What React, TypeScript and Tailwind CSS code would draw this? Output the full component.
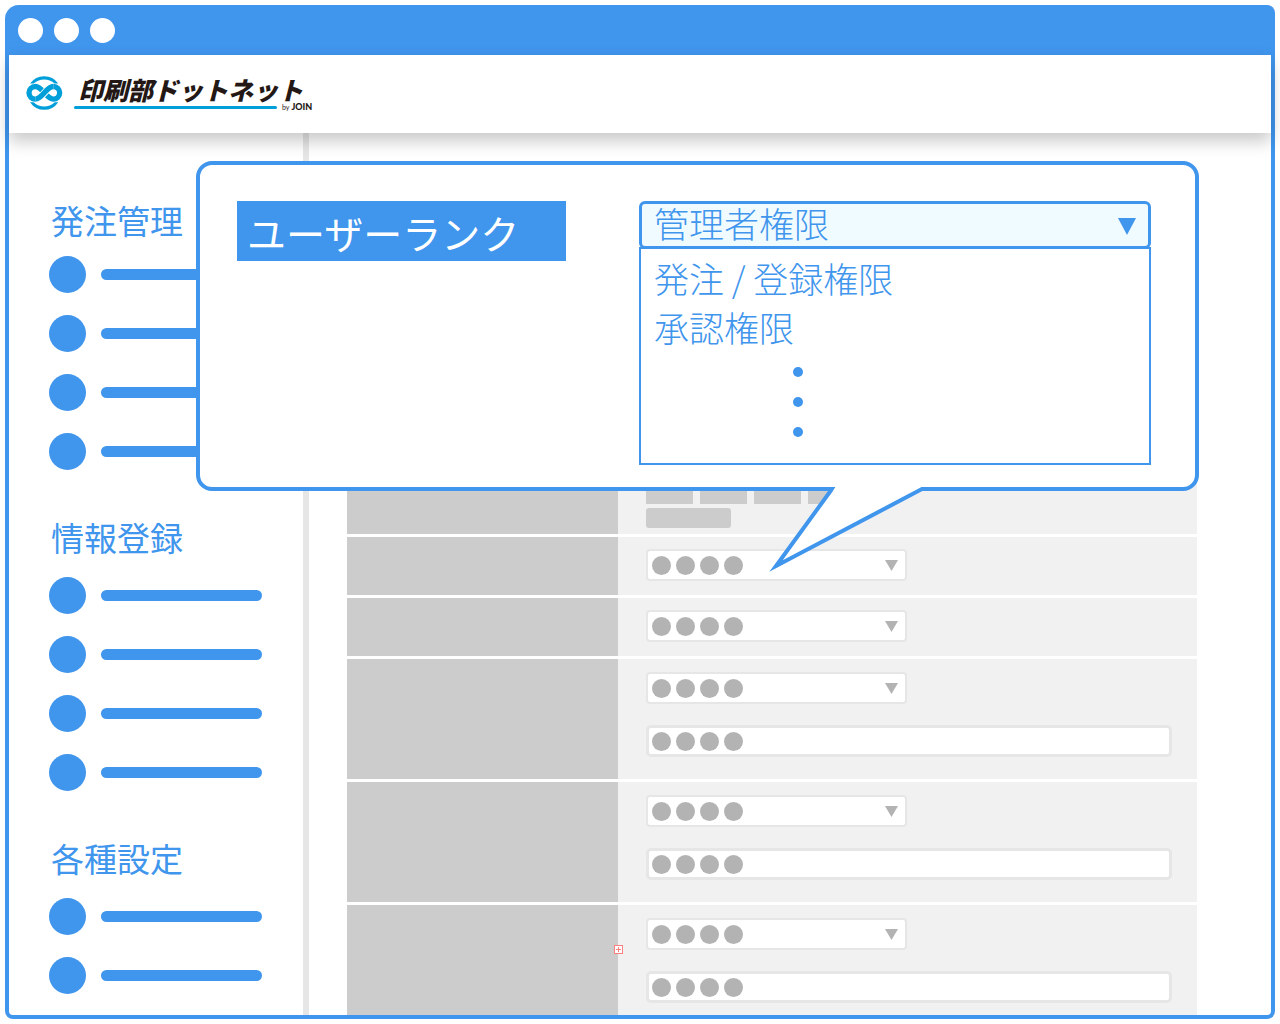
import React from "react";

const menuGroups = [
  { title: "発注管理", count: 4, headingGap: "mb-4" },
  { title: "情報登録", count: 4, headingGap: "mb-5" },
  { title: "各種設定", count: 2, headingGap: "mb-5" },
];

const formRows = [
  { id: "row-1", kind: "single", pad: "pt-3 pb-3.5" },
  { id: "row-2", kind: "single", pad: "pt-3 pb-3.5" },
  { id: "row-3", kind: "double", pad: "pt-[13px] pb-[22px]" },
  { id: "row-4", kind: "double", pad: "pt-[13px] pb-[22px]" },
  { id: "row-5", kind: "double", pad: "pt-[13px] pb-[11px]" },
];

function LogoMark() {
  return (
    <svg className="h-[34px] w-[37px] shrink-0" viewBox="79 228 111 101" fill="none" aria-hidden="true">
      <path d="M91 250 Q107 228 133.500 228 Q160 228 176 250 H165 Q151 238 133.500 238 Q116 238 102 250 Z" fill="#009fd9" />
      <path d="M91 306 Q107 329 133.500 329 Q160 329 176 306 H165 Q151 319 133.500 319 Q116 319 102 306 Z" fill="#009fd9" />
      <g stroke="#009fd9" strokeWidth="16">
        <path d="M107 297 A19 19 0 0 1 107 259 C128 259 140 297 161 297 A19 19 0 0 0 161 259" />
        <path d="M124 288 C132 282 137 274 144 268" stroke="#fff" strokeWidth="21" />
        <path d="M107 297 C128 297 140 259 161 259" />
      </g>
    </svg>
  );
}

function Logo() {
  return (
    <a href="#" className="flex items-center gap-[11px]" aria-label="印刷部ドットネット by JOIN">
      <LogoMark />
      <span className="flex flex-col">
        <span className="pt-0.5 pb-0.5 pl-1 text-[25px] leading-6 font-black whitespace-nowrap text-[#231815] italic">
          印刷部ドットネット
        </span>
        <span className="flex items-center gap-[5px]">
          <span className="h-[3px] w-[203px] rounded-full bg-[#009fd9]" />
          <span className="flex items-baseline gap-0.5 font-[Lato] leading-2 text-[#231815]">
            <span className="text-[7px]">by</span>
            <span className="text-[9px] font-black">JOIN</span>
          </span>
        </span>
      </span>
    </a>
  );
}

function Sidebar() {
  return (
    <nav className="w-[300px] shrink-0 border-r-6 border-[#e6e6e6] pt-[67px] pr-[41px] pb-[21px] pl-10">
      {menuGroups.map((group) => (
        <section key={group.title} className="mb-[47px] last:mb-0">
          <h2 className={`pl-0.5 text-[33px] leading-10 whitespace-nowrap text-[#4095ed] ${group.headingGap}`}>
            {group.title}
          </h2>
          <ul className="flex flex-col gap-[22px]">
            {Array.from({ length: group.count }, (_, i) => (
              <li key={i}>
                <a href="#" aria-label={`${group.title} ${i + 1}`} className="flex items-center gap-[15px]">
                  <span className="size-[37px] shrink-0 rounded-full bg-[#4095ed]" />
                  <span className="h-[11px] flex-1 rounded-full bg-[#4095ed]" />
                </a>
              </li>
            ))}
          </ul>
        </section>
      ))}
    </nav>
  );
}

function Dots() {
  return (
    <span className="pointer-events-none absolute inset-y-0 left-1.5 flex items-center gap-[5px]">
      {[0, 1, 2, 3].map((i) => (
        <span key={i} className="size-[19px] rounded-full bg-[#b3b3b3]" />
      ))}
    </span>
  );
}

function DotSelect({ label }: { label: string }) {
  return (
    <div className="relative w-[261px]">
      <select
        aria-label={label}
        className="block h-8 w-full appearance-none rounded-sm border-2 border-[#e6e6e6] bg-white"
      />
      <Dots />
      <svg className="pointer-events-none absolute top-[11px] right-[9px] h-[11px] w-[13px]" viewBox="0 0 13 11" aria-hidden="true">
        <path d="M0 0H13L6.500 11Z" fill="#b3b3b3" />
      </svg>
    </div>
  );
}

function DotInput({ label }: { label: string }) {
  return (
    <div className="relative">
      <input
        type="text"
        aria-label={label}
        className="block h-8 w-full rounded-[5px] border-3 border-[#e6e6e6] bg-white"
      />
      <Dots />
    </div>
  );
}

function FormTable() {
  return (
    <div className="flex flex-1 flex-col gap-[3px] pt-[38px] pr-[74px] pl-[38px]">
      <div className="flex h-[363px]">
        <div className="w-[271px] shrink-0 bg-[#cccccc]" />
        <div className="flex flex-1 flex-col justify-end gap-1 bg-[#f1f1f1] pb-1.5 pl-7">
          <div className="flex gap-[7px]">
            {[0, 1, 2, 3].map((i) => (
              <span key={i} className="h-5 w-[47px] bg-[#cccccc]" />
            ))}
          </div>
          <span className="h-5 w-[85px] rounded-[3px] bg-[#cccccc]" />
        </div>
      </div>
      {formRows.map((row) => (
        <div key={row.id} className="relative flex last:flex-1">
          <div className="w-[271px] shrink-0 bg-[#cccccc]" />
          <div className={`flex flex-1 flex-col gap-[21px] bg-[#f1f1f1] pr-[25px] pl-7 ${row.pad}`}>
            <DotSelect label={`${row.id} 選択`} />
            {row.kind === "double" && <DotInput label={`${row.id} 入力`} />}
          </div>
          {row.id === "row-5" && (
            <svg className="absolute top-10 left-[267px] size-[9px]" viewBox="0 0 9 9" fill="none" stroke="#ff7f7f" aria-hidden="true">
              <rect x="0.500" y="0.500" width="8" height="8" fill="#fff" />
              <path d="M4.500 2V7M2 4.500H7" />
            </svg>
          )}
        </div>
      ))}
    </div>
  );
}

function Callout() {
  return (
    <section className="absolute top-7 right-[72px] left-[187px] flex items-start gap-[73px] rounded-2xl border-4 border-[#4095ed] bg-white pt-9 pr-11 pb-[22px] pl-[37px]">
      <label
        htmlFor="user-rank"
        className="flex h-[60px] w-[329px] shrink-0 items-center bg-[#4095ed] pt-0.5 pl-2.5 text-[39px] leading-[52px] text-white"
      >
        ユーザーランク
      </label>
      <div className="flex-1 text-[35px] font-light text-[#4095ed]">
        <div className="relative">
          <select
            id="user-rank"
            className="block h-12 w-full appearance-none rounded-md border-3 border-[#4095ed] bg-[#f0fbff] pb-1 pl-3 leading-9"
          >
            <option>管理者権限</option>
          </select>
          <svg className="pointer-events-none absolute top-[17px] right-[15px] h-[17px] w-[18px]" viewBox="0 0 18 17" aria-hidden="true">
            <path d="M0 0H18L9 17Z" fill="#4095ed" />
          </svg>
        </div>
        <div className="-mt-0.5 border-2 border-[#4095ed] pt-1 pb-[26px]">
          <ul>
            {["発注 / 登録権限", "承認権限"].map((item) => (
              <li key={item}>
                <button type="button" className="block h-[49px] w-full pl-[13px] text-left leading-[49px]">
                  {item}
                </button>
              </li>
            ))}
          </ul>
          <div className="mt-4 flex flex-col gap-5 pl-[152px]">
            {[0, 1, 2].map((i) => (
              <span key={i} className="size-2.5 rounded-full bg-[#4095ed]" />
            ))}
          </div>
        </div>
      </div>
      <svg className="absolute top-full left-[560px] h-[90px] w-[180px]" viewBox="760 487 180 90" aria-hidden="true">
        <path d="M832 487H922V492H832Z" fill="#fff" />
        <path d="M820 489H832L776 566L922 489H935" fill="#fff" stroke="#4095ed" strokeWidth="4" strokeMiterlimit="10" />
        <path d="M836 486H918L914 491H833Z" fill="#fff" />
      </svg>
    </section>
  );
}

export default function App() {
  return (
    <div className="flex min-h-screen flex-col bg-white p-[5px] font-['Noto_Sans_CJK_JP',sans-serif]">
      <div className="flex flex-1 flex-col rounded-lg rounded-tl-[14px] border-x-4 border-b-4 border-[#4095ed] bg-[#4095ed]">
        <div className="flex h-[50px] items-center gap-[11px] pl-[9px]">
          {[0, 1, 2].map((i) => (
            <span key={i} className="size-[25px] rounded-full bg-white" />
          ))}
        </div>
        <header className="relative z-10 flex h-[78px] items-center bg-white pb-0.5 pl-[17px] shadow-[0_8px_16px_rgba(0,0,0,0.22)]">
          <Logo />
        </header>
        <main className="relative flex flex-1 rounded-b-[4px] bg-white">
          <Sidebar />
          <FormTable />
          <Callout />
        </main>
      </div>
    </div>
  );
}
